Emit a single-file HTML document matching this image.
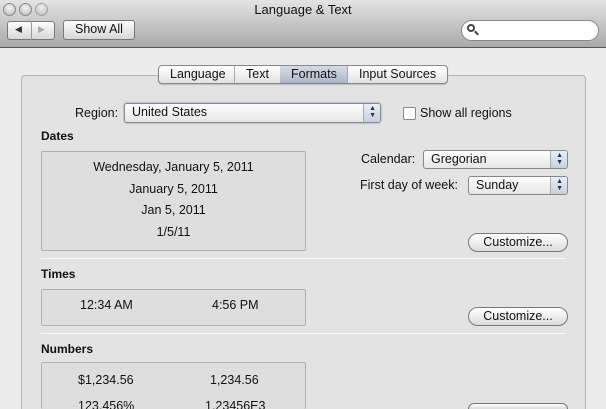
<!DOCTYPE html><html><head><style>
*{margin:0;padding:0;box-sizing:border-box}
html{width:606px;height:409px;overflow:hidden}
body{width:606px;height:409px;overflow:hidden;background:#e8e8e8;font-family:"Liberation Sans",sans-serif;font-size:12.5px;color:#111;position:relative}
.a{position:absolute;white-space:nowrap}
.tb{left:0;top:0;width:606px;height:48px;background:linear-gradient(#e4e4e4,#a9a9a9);border-bottom:1px solid #555}
.tl{width:13px;height:13px;border-radius:50%;background:radial-gradient(circle at 50% 35%,#f6f6f6,#b5b5b5);border:1px solid #8a8a8a;top:3px}
.btn{background:linear-gradient(#fdfdfd,#d6d6d6);border:1px solid #777;border-radius:3px;text-align:center;line-height:17px}
.box{background:#dedede;border:1px solid #b0b0b0;border-radius:2px}
.pop{background:linear-gradient(#fefefe,#e6e6e6);border:1px solid #888;border-radius:3px;padding-left:7px;line-height:17px}
.pop:after{content:"";position:absolute;right:0;top:0;width:16px;height:100%;background:linear-gradient(#e8eefa,#c7d0e0);border-left:1px solid #aaa;border-radius:0 3px 3px 0}
.ar{right:4px;top:1px;z-index:2;font-size:7px;line-height:7px;color:#333}
.cz{background:linear-gradient(#fff,#dcdcdc);border:1px solid #777;border-radius:10px;text-align:center;line-height:17px}
.sep{height:1px;background:#999;border-bottom:1px solid #fafafa;left:41px;width:525px}
.b{font-weight:bold;font-size:12px}
.c{text-align:center}
</style></head><body>
<div class="a tb"></div>
<div class="a tl" style="left:3px"></div><div class="a tl" style="left:19px"></div><div class="a tl" style="left:35px;opacity:.7"></div>
<div class="a" style="left:0;width:606px;top:2px;text-align:center;font-size:13px">Language &amp; Text</div>
<div class="a btn" style="left:7px;top:21px;width:48px;height:19px"></div>
<div class="a" style="left:31px;top:21px;width:1px;height:19px;background:#999"></div>
<div class="a" style="left:15px;top:24px;font-size:9px;color:#333">◀</div>
<div class="a" style="left:38px;top:24px;font-size:9px;color:#aaa">▶</div>
<div class="a btn" style="left:63px;top:20px;width:72px;height:20px">Show All</div>
<div class="a" style="left:461px;top:20px;width:138px;height:21px;background:#fff;border:1px solid #888;border-radius:11px"></div>
<div class="a" style="left:467px;top:24px;width:8px;height:8px;border:2px solid #444;border-radius:50%"></div>
<div class="a" style="left:474px;top:32px;width:5px;height:2px;background:#444;transform:rotate(45deg)"></div>
<div class="a" style="left:0;top:48px;width:606px;height:361px;background:#ececec"></div>
<div class="a" style="left:21px;top:75px;width:565px;height:334px;background:#e3e3e3;border:1px solid #b4b4b4;border-bottom:none;border-radius:4px 4px 0 0"></div>
<div class="a" style="left:158px;top:65px;width:290px;height:19px;background:linear-gradient(#fff,#e2e2e2);border:1px solid #888;border-radius:4px;box-shadow:0 1px 1px #bbb"></div>
<div class="a" style="left:280px;top:66px;width:67px;height:17px;background:linear-gradient(#d4dbe6,#aeb8c6)"></div>
<div class="a" style="left:234px;top:66px;width:1px;height:17px;background:#aaa"></div>
<div class="a" style="left:347px;top:66px;width:1px;height:17px;background:#aaa"></div>
<div class="a" style="left:170px;top:67px">Language</div>
<div class="a" style="left:246px;top:67px">Text</div>
<div class="a" style="left:291px;top:67px">Formats</div>
<div class="a" style="left:359px;top:67px">Input Sources</div>
<div class="a" style="left:75px;top:106px">Region:</div>
<div class="a pop" style="left:124px;top:103px;width:257px;height:20px;box-shadow:0 0 2px #7a96c0">United States<span class="a ar">▲<br>▼</span></div>
<div class="a" style="left:403px;top:107px;width:13px;height:13px;background:#fff;border:1px solid #888;border-radius:2px"></div>
<div class="a" style="left:420px;top:106px">Show all regions</div>
<div class="a b" style="left:41px;top:129px">Dates</div>
<div class="a box" style="left:41px;top:151px;width:265px;height:100px"></div>
<div class="a c" style="left:41px;width:265px;top:157px;line-height:21.7px">Wednesday, January 5, 2011<br>January 5, 2011<br>Jan 5, 2011<br>1/5/11</div>
<div class="a" style="left:361px;top:152px">Calendar:</div>
<div class="a pop" style="left:423px;top:150px;width:145px;height:19px">Gregorian<span class="a ar">▲<br>▼</span></div>
<div class="a" style="left:360px;top:178px">First day of week:</div>
<div class="a pop" style="left:468px;top:176px;width:100px;height:19px">Sunday<span class="a ar">▲<br>▼</span></div>
<div class="a cz" style="left:468px;top:233px;width:100px;height:19px">Customize...</div>
<div class="a sep" style="top:258px"></div>
<div class="a b" style="left:41px;top:267px">Times</div>
<div class="a box" style="left:41px;top:289px;width:265px;height:37px"></div>
<div class="a" style="left:80px;top:298px">12:34 AM</div>
<div class="a" style="left:212px;top:298px">4:56 PM</div>
<div class="a cz" style="left:468px;top:307px;width:100px;height:19px">Customize...</div>
<div class="a sep" style="top:333px"></div>
<div class="a b" style="left:41px;top:342px">Numbers</div>
<div class="a box" style="left:41px;top:362px;width:265px;height:47px;border-bottom:none"></div>
<div class="a" style="left:78px;top:373px">$1,234.56</div>
<div class="a" style="left:210px;top:373px">1,234.56</div>
<div class="a" style="left:78px;top:399px">123,456%</div>
<div class="a" style="left:205px;top:399px">1.23456E3</div>
<div class="a cz" style="left:468px;top:403px;width:100px;height:6px;border-bottom:none;border-radius:10px 10px 0 0"></div>
</body></html>
